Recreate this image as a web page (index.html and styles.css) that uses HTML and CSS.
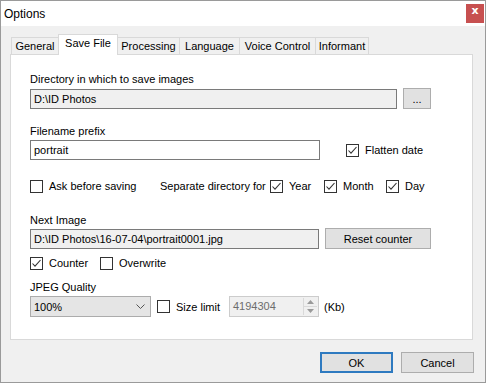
FILE: index.html
```html
<!DOCTYPE html>
<html lang="en">

<head>
    <meta charset="UTF-8">
    <title>Options</title>
    <link rel="stylesheet" href="styles.css">
</head>

<body>
    <div class="window">
        <div class="titlebar">
            <span class="title">Options</span>
            <span class="close">x</span>
        </div>

        <div class="tabs">
            <span class="tab t-general">General</span>
            <span class="tab t-save active">Save File</span>
            <span class="tab t-proc">Processing</span>
            <span class="tab t-lang">Language</span>
            <span class="tab t-voice">Voice Control</span>
            <span class="tab t-inf">Informant</span>
        </div>

        <div class="panel">
            <div class="label">Directory in which to save images</div>
            <div class="row row-dir">
                <div class="field readonly w-dir">D:\ID Photos</div>
                <div class="btn btn-browse">...</div>
            </div>

            <div class="label lbl-prefix">Filename prefix</div>
            <div class="row row-prefix">
                <div class="field w-prefix">portrait</div>
                <div class="check flatten">
                    <span class="cb on"><svg width="11" height="11" viewBox="0 0 11 11"><path d="M1.5 5.5 L4 8.2 L9.5 2" /></svg></span>
                    Flatten date
                </div>
            </div>

            <div class="row row-sep">
                <div class="check i-ask"><span class="cb"></span>Ask before saving</div>
                <span class="sep-text">Separate directory for</span>
                <div class="check i-year">
                    <span class="cb on"><svg width="11" height="11" viewBox="0 0 11 11"><path d="M1.5 5.5 L4 8.2 L9.5 2" /></svg></span>
                    Year
                </div>
                <div class="check i-month">
                    <span class="cb on"><svg width="11" height="11" viewBox="0 0 11 11"><path d="M1.5 5.5 L4 8.2 L9.5 2" /></svg></span>
                    Month
                </div>
                <div class="check">
                    <span class="cb on"><svg width="11" height="11" viewBox="0 0 11 11"><path d="M1.5 5.5 L4 8.2 L9.5 2" /></svg></span>
                    Day
                </div>
            </div>

            <div class="label lbl-next">Next Image</div>
            <div class="row row-next">
                <div class="field readonly w-next">D:\ID Photos\16-07-04\portrait0001.jpg</div>
                <div class="btn btn-reset">Reset counter</div>
            </div>

            <div class="row row-counter">
                <div class="check i-counter">
                    <span class="cb on"><svg width="11" height="11" viewBox="0 0 11 11"><path d="M1.5 5.5 L4 8.2 L9.5 2" /></svg></span>
                    Counter
                </div>
                <div class="check"><span class="cb"></span>Overwrite</div>
            </div>

            <div class="label lbl-jpeg">JPEG Quality</div>
            <div class="row row-jpeg">
                <div class="combo">
                    <span>100%</span>
                    <svg class="chev" width="9" height="5" viewBox="0 0 9 5"><path d="M0.5 0.5 L4.5 4.5 L8.5 0.5" /></svg>
                </div>
                <div class="check i-size"><span class="cb"></span>Size limit</div>
                <div class="spin">
                    <span class="spin-val">4194304</span>
                    <span class="spin-btns">
                        <span class="arrow"><svg width="7" height="4" viewBox="0 0 7 4"><path d="M0 4 L3.5 0 L7 4 Z" /></svg></span>
                        <span class="arrow"><svg width="7" height="4" viewBox="0 0 7 4"><path d="M0 0 L3.5 4 L7 0 Z" /></svg></span>
                    </span>
                </div>
                <span class="unit">(Kb)</span>
            </div>
        </div>

        <div class="footer">
            <div class="btn btn-dlg btn-ok">OK</div>
            <div class="btn btn-dlg">Cancel</div>
        </div>
    </div>
</body>

</html>
```

FILE: styles.css
```css
* {
    margin: 0;
    padding: 0;
    box-sizing: border-box;
}

body {
    font-family: "Liberation Sans", Arial, sans-serif;
    font-size: 11px;
    color: #000;
    background-color: #fff;
}

.window {
    width: 486px;
    height: 383px;
    border: 1px solid #9a9a9a;
    background-color: #f0f0f0;
    display: flex;
    flex-direction: column;
}

/* title bar */
.titlebar {
    height: 25px;
    background-color: #fff;
    display: flex;
    align-items: center;
    padding-left: 3px;
}

.title {
    flex: 1;
    font-size: 12px;
}

.close {
    width: 18px;
    height: 19px;
    margin-right: 1px;
    background-color: #c75050;
    color: #fff;
    text-align: center;
    line-height: 17px;
    font: bold 11px "DejaVu Sans", sans-serif;
}

/* tabs */
.tabs {
    height: 28px;
    display: flex;
    align-items: flex-end;
    padding-left: 10px;
}

.tab {
    height: 17px;
    line-height: 16px;
    border: 1px solid #d9d9d9;
    border-bottom: 0;
    background-color: #f0f0f0;
    text-align: center;
    white-space: nowrap;
    margin-left: -1px;
}

.tab.active {
    height: 21px;
    line-height: 17px;
    margin-bottom: -1px;
    background-color: #fff;
    position: relative;
    z-index: 1;
}

.t-general { width: 48px; margin-left: 0; }
.t-save { width: 60px; }
.t-proc { width: 63px; }
.t-lang { width: 61px; }
.t-voice { width: 77px; }
.t-inf { width: 54px; }

/* panel */
.panel {
    width: 463px;
    height: 286px;
    margin-left: 9px;
    background-color: #fff;
    border: 1px solid #d9d9d9;
    padding: 17px 0 0 19px;
}

.label {
    height: 15px;
    line-height: 15px;
}

.row {
    display: flex;
    align-items: center;
    white-space: nowrap;
}

.field {
    height: 20px;
    line-height: 18px;
    border: 1px solid #7a7a7a;
    background-color: #fff;
    padding-left: 3px;
    white-space: nowrap;
}

.field.readonly {
    background-color: #f0f0f0;
}

.btn {
    height: 21px;
    border: 1px solid #adadad;
    background-color: #e1e1e1;
    display: flex;
    align-items: center;
    justify-content: center;
}

.check {
    display: flex;
    align-items: center;
}

.cb {
    width: 13px;
    height: 13px;
    border: 1px solid #333;
    background-color: #fff;
    margin-right: 6px;
    display: flex;
}

.cb svg path {
    fill: none;
    stroke: #333;
    stroke-width: 1.1;
}

.row-dir { height: 21px; margin-top: 1px; }
.w-dir { width: 367px; }
.btn-browse { width: 28px; margin-left: 6px; }

.lbl-prefix { margin-top: 15px; }
.row-prefix { height: 20px; margin-top: 1px; }
.w-prefix { width: 290px; }
.flatten { margin-left: 26px; }

.row-sep { height: 20px; margin-top: 16px; }
.i-ask { width: 130px; }
.sep-text { width: 110px; }
.i-year { width: 54px; }
.i-month { width: 62px; }

.lbl-next { margin-top: 17px; }
.row-next { height: 21px; }
.w-next { width: 289px; }
.btn-reset { width: 106px; margin-left: 6px; }

.row-counter { height: 20px; margin-top: 4px; }
.i-counter { width: 70px; }

.lbl-jpeg { margin-top: 7px; }
.row-jpeg { height: 21px; margin-top: 1px; }

.combo {
    width: 121px;
    height: 21px;
    border: 1px solid #acacac;
    background-color: #e5e5e5;
    display: flex;
    align-items: center;
    padding: 0 5px 0 3px;
}

.combo span {
    flex: 1;
}

.chev path {
    fill: none;
    stroke: #555;
    stroke-width: 1;
}

.i-size { width: 72px; margin-left: 6px; }

.spin {
    width: 90px;
    height: 21px;
    border: 1px solid #cccccc;
    background-color: #f0f0f0;
    display: flex;
    padding: 1px 1px 1px 3px;
}

.spin-val {
    flex: 1;
    color: #6d6d6d;
    line-height: 17px;
}

.spin-btns {
    width: 14px;
    display: flex;
    flex-direction: column;
    border-left: 1px solid #d9d9d9;
}

.arrow {
    flex: 1;
    display: flex;
    align-items: center;
    justify-content: center;
}

.arrow + .arrow {
    border-top: 1px solid #d9d9d9;
}

.arrow path {
    fill: #9a9a9a;
}

.unit { margin-left: 5px; }

/* dialog buttons */
.footer {
    display: flex;
    justify-content: flex-end;
    gap: 8px;
    margin-top: 12px;
    padding-right: 11px;
}

.btn-dlg {
    width: 73px;
}

.btn-ok {
    border: 2px solid #2e7ac0;
}
```
